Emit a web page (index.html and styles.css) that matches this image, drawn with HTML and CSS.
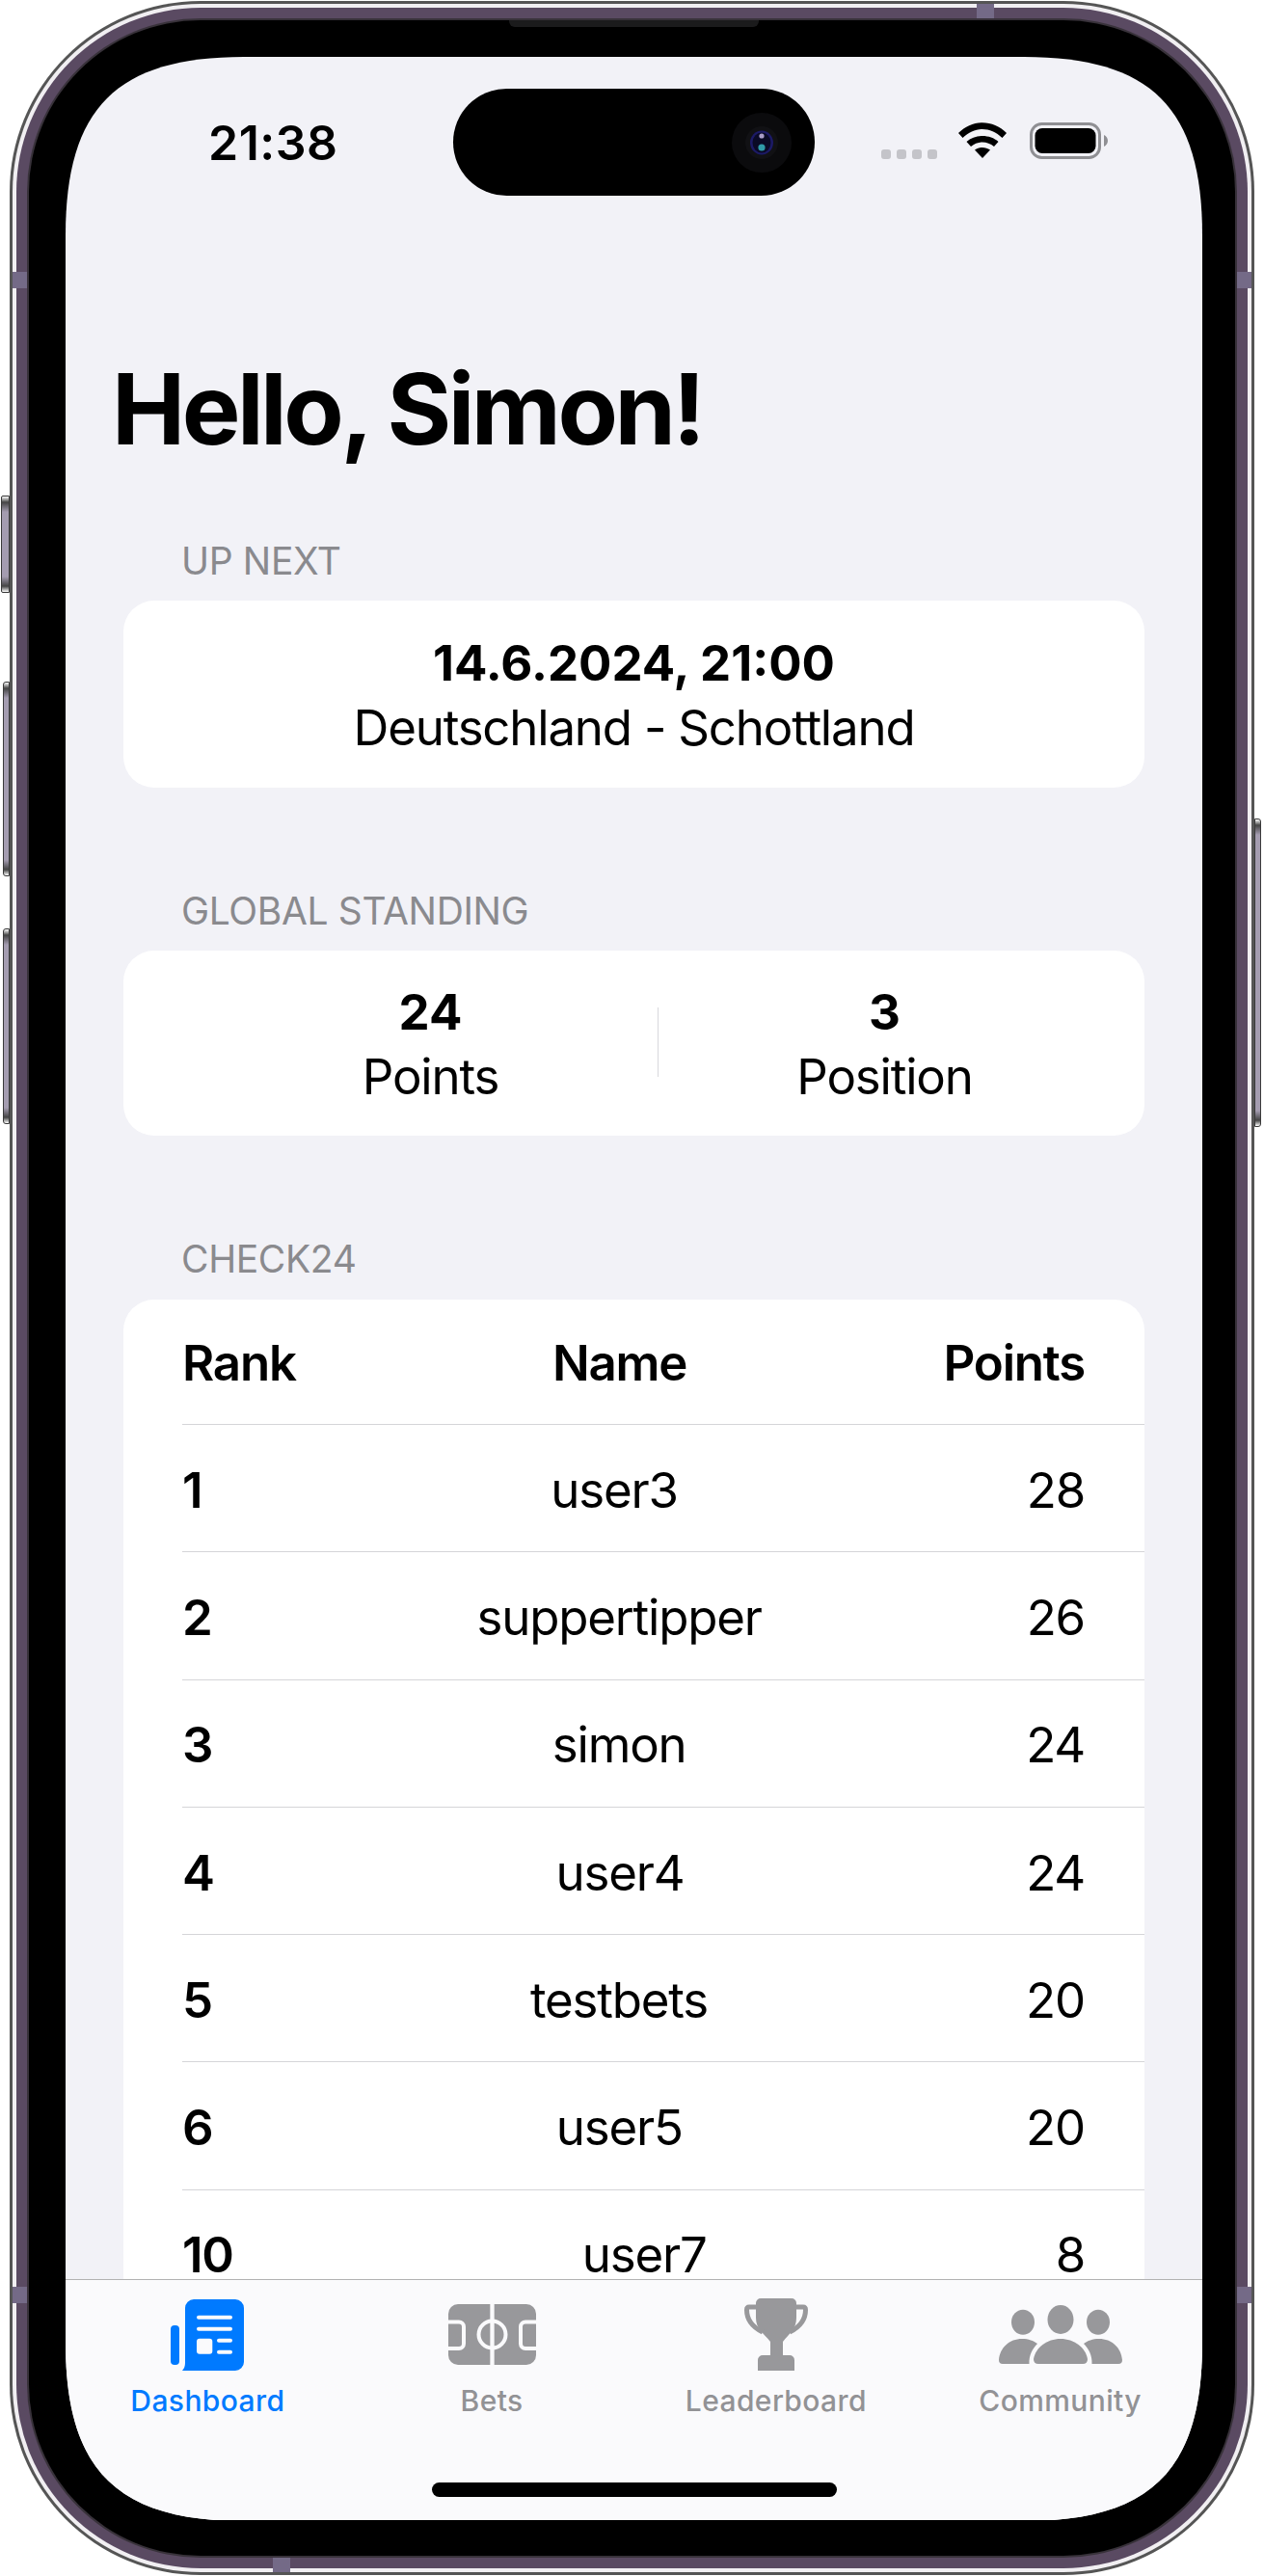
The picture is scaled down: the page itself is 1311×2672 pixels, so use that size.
FILE: index.html
```html
<!DOCTYPE html>
<html lang="en">
<head>
<meta charset="utf-8">
<title>Dashboard</title>
<link rel="stylesheet" href="styles.css">
</head>
<body>
<div class="device">
  <span class="btn btn-mute"></span>
  <span class="btn btn-up"></span>
  <span class="btn btn-down"></span>
  <span class="btn btn-power"></span>
  <div class="rim">
    <div class="band">
      <span class="ant ant-l1"></span>
      <span class="ant ant-l2"></span>
      <span class="ant ant-r1"></span>
      <span class="ant ant-r2"></span>
      <span class="ant ant-t"></span>
      <span class="ant ant-b"></span>
      <div class="inner-line">
        <div class="bezel">
          <span class="speaker"></span>
          <div class="screen">
            <header class="status">
              <div class="time">21:38</div>
              <div class="island">
                <svg class="camera" width="62" height="62" viewBox="0 0 62 62">
                  <circle cx="31" cy="31" r="31" fill="#0b0b0d"/>
                  <circle cx="31" cy="31" r="17" fill="#111114"/>
                  <ellipse cx="31" cy="31" rx="12" ry="12.5" fill="#1c1a66"/>
                  <ellipse cx="31" cy="31" rx="9.5" ry="10.5" fill="#0a0a26"/>
                  <circle cx="31" cy="24" r="2.6" fill="#a89cc8"/>
                  <circle cx="31" cy="36" r="3.6" fill="#2f9aa8"/>
                </svg>
              </div>
              <div class="indicators">
                <div class="dots"><i></i><i></i><i></i><i></i></div>
                <svg class="wifi" width="50" height="37" viewBox="0 0 50 37">
                  <path d="M0 11C14-3.500 36-3.500 50 11L45.500 16C33 4 17 4 4.500 16Z"/>
                  <path d="M8.500 20C17 12 33 12 41.500 20L37 25C30 19 20 19 13 25Z"/>
                  <path d="M17 28.500C22 25 28 25 33 28.500L25 37Z"/>
                </svg>
                <svg class="battery" width="81" height="38" viewBox="0 0 81 38">
                  <rect x="1.500" y="1.500" width="71" height="35" rx="11" fill="none" stroke="#8f8f93" stroke-width="3"/>
                  <rect x="5.500" y="6" width="63" height="26" rx="7.500" fill="#000"/>
                  <path d="M77 13C79.500 14 81 16.500 81 19C81 21.500 79.500 24 77 25Z" fill="#8f8f93"/>
                </svg>
              </div>
            </header>

            <main class="content">
              <h1 class="title">Hello, Simon!</h1>

              <section class="group">
                <h2 class="group-label">UP NEXT</h2>
                <div class="card card-next">
                  <div class="strong">14.6.2024, 21:00</div>
                  <div class="plain">Deutschland - Schottland</div>
                </div>
              </section>

              <section class="group">
                <h2 class="group-label">GLOBAL STANDING</h2>
                <div class="card card-standing">
                  <div class="stat">
                    <div class="strong">24</div>
                    <div class="plain">Points</div>
                  </div>
                  <div class="stat">
                    <div class="strong">3</div>
                    <div class="plain">Position</div>
                  </div>
                </div>
              </section>

              <section class="group">
                <h2 class="group-label group-label-table">CHECK24</h2>
                <div class="card card-table">
                  <div class="row row-head"><span>Rank</span><span>Name</span><span>Points</span></div>
                  <div class="row"><span class="rank">1</span><span>user3</span><span>28</span></div>
                  <div class="row"><span class="rank">2</span><span>suppertipper</span><span>26</span></div>
                  <div class="row"><span class="rank">3</span><span>simon</span><span>24</span></div>
                  <div class="row"><span class="rank">4</span><span>user4</span><span>24</span></div>
                  <div class="row"><span class="rank">5</span><span>testbets</span><span>20</span></div>
                  <div class="row"><span class="rank">6</span><span>user5</span><span>20</span></div>
                  <div class="row"><span class="rank">10</span><span>user7</span><span>8</span></div>
                </div>
              </section>
            </main>

            <nav class="tabbar">
              <div class="tabs">
                <div class="tab tab-active">
                  <div class="tab-icon">
                    <svg width="76" height="74" viewBox="0 0 76 74">
                      <rect x="0" y="27" width="9" height="41" rx="4" fill="#007aff"/>
                      <path fill="#007aff" d="M24 0H67a9 9 0 0 1 9 9V65a9 9 0 0 1-9 9H12C14 72 15 69 15 66V9a9 9 0 0 1 9-9Z"/>
                      <g fill="#fafafc">
                        <rect x="27" y="16.700" width="37" height="4" rx="2"/>
                        <rect x="27" y="28.700" width="37" height="4" rx="2"/>
                        <rect x="27" y="40.700" width="16.300" height="16" rx="3"/>
                        <rect x="48" y="40.700" width="16" height="4" rx="2"/>
                        <rect x="48" y="52.700" width="16" height="4" rx="2"/>
                      </g>
                    </svg>
                  </div>
                  <span class="tab-label">Dashboard</span>
                </div>
                <div class="tab">
                  <div class="tab-icon">
                    <svg width="91" height="63" viewBox="0 0 91 63">
                      <rect width="91" height="63" rx="10" fill="#98989b"/>
                      <g fill="none" stroke="#fafafc" stroke-width="4">
                        <path d="M45.500 0V63" stroke-width="4.300"/>
                        <circle cx="45.500" cy="31.500" r="14"/>
                        <path d="M0 18.500H11a5 5 0 0 1 5 5V41a5 5 0 0 1-5 5H0"/>
                        <path d="M91 18.500H80a5 5 0 0 0-5 5V41a5 5 0 0 0 5 5H91"/>
                      </g>
                    </svg>
                  </div>
                  <span class="tab-label">Bets</span>
                </div>
                <div class="tab">
                  <div class="tab-icon">
                    <svg width="66" height="75" viewBox="0 0 66 75">
                      <path fill="#98989b" d="M17 0H49a5 5 0 0 1 5 5V20C54 32 47 36 40 45V59H47a5 5 0 0 1 5 5V75H14V64a5 5 0 0 1 5-5H27V45C20 36 12 32 12 20V5a5 5 0 0 1 5-5Z"/>
                      <g fill="none" stroke="#98989b" stroke-width="5">
                        <path d="M12 9H5Q2.500 9 2.500 12C2.500 22 9 30 19 35"/>
                        <path d="M54 9H61Q63.500 9 63.500 12C63.500 22 57 30 47 35"/>
                      </g>
                    </svg>
                  </div>
                  <span class="tab-label">Leaderboard</span>
                </div>
                <div class="tab">
                  <div class="tab-icon">
                    <svg width="128" height="61" viewBox="0 0 128 61">
                      <g fill="#98989b">
                        <ellipse cx="64" cy="15" rx="13.500" ry="15"/>
                        <ellipse cx="25" cy="17.700" rx="12" ry="13"/>
                        <ellipse cx="103" cy="17.700" rx="12" ry="13"/>
                        <path d="M41 61Q36 61 36 56C38 44 50 35 64 35C78 35 90 44 92 56Q92 61 87 61Z"/>
                        <path d="M4 61Q0 61 0 57C1 44 11 35 24 35C31 35 36 37 40 40C35 45 31 52 31.500 61Z"/>
                        <path d="M124 61Q128 61 128 57C127 44 117 35 104 35C97 35 92 37 88 40C93 45 97 52 96.500 61Z"/>
                      </g>
                    </svg>
                  </div>
                  <span class="tab-label">Community</span>
                </div>
              </div>
              <div class="home-indicator"></div>
            </nav>
          </div>
        </div>
      </div>
    </div>
  </div>
</div>
</body>
</html>
```

FILE: styles.css
```css
* { box-sizing: border-box; }
html, body { margin: 0; padding: 0; background: #fff; }
body {
  width: 1311px;
  height: 2672px;
  padding: 1px 10px;
  overflow: hidden;
  font-family: Inter, "Liberation Sans", sans-serif;
  color: #000;
}

/* device frame */
.device {
  position: relative;
  width: 1291px;
  height: 2670px;
  background: #555;
  border-radius: 198px;
  padding: 3px;
}
.rim {
  height: 100%;
  background: #f1eff2;
  border-radius: 195px;
  padding: 4px;
}
.band {
  position: relative;
  height: 100%;
  background: #5a4a62;
  border-radius: 191px;
  padding: 11px;
}
.inner-line {
  height: 100%;
  background: #38323a;
  border-radius: 180px;
  padding: 2px;
}
.bezel {
  position: relative;
  height: 100%;
  background: #000;
  border-radius: 178px;
  padding: 38px 34px 37px 38px;
}
.speaker {
  position: absolute;
  top: 0;
  left: 498px;
  width: 259px;
  height: 7px;
  background: #1b1b1c;
  border-radius: 0 0 6px 6px;
}
.ant { position: absolute; background: #746a87; }
.ant-l1 { left: -4px; top: 274px; width: 15px; height: 17px; }
.ant-l2 { left: -4px; top: 2364px; width: 15px; height: 17px; }
.ant-r1 { right: -4px; top: 274px; width: 15px; height: 17px; }
.ant-r2 { right: -4px; top: 2364px; width: 15px; height: 17px; }
.ant-t { top: -4px; left: 996px; width: 18px; height: 15px; }
.ant-b { bottom: -4px; left: 266px; width: 18px; height: 15px; }

.btn {
  position: absolute;
  width: 7px;
  border: 1px solid #3a3a3a;
  background: linear-gradient(to bottom, #fff 0, #444 6px, #a49cb0 16px, #a49cb0 calc(100% - 16px), #444 calc(100% - 6px), #fff 100%);
}
.btn-mute { left: -9px; top: 513px; width: 9px; height: 101px; border-radius: 2px 0 0 2px; }
.btn-up { left: -7px; top: 706px; height: 202px; border-radius: 3px 0 0 3px; }
.btn-down { left: -7px; top: 962px; height: 203px; border-radius: 3px 0 0 3px; }
.btn-power { right: -7px; top: 848px; height: 320px; border-radius: 0 3px 3px 0; }

/* screen */
.screen {
  position: relative;
  height: 100%;
  width: 1179px;
  display: flex;
  flex-direction: column;
  overflow: hidden;
  background: #f2f2f7;
  clip-path: path("M0 185C0 53 53 0 185 0H994C1126 0 1179 53 1179 185V2371C1179 2503 1126 2556 994 2556H185C53 2556 0 2503 0 2371Z");
}
.status {
  flex: none;
  height: 150px;
  padding-top: 33px;
  display: grid;
  grid-template-columns: 402px 375px 1fr;
}
.time {
  padding: 26px 0 0 148px;
  font-size: 50px;
  line-height: 60px;
  font-weight: 600;
  letter-spacing: 0.5px;
}
.island {
  height: 111px;
  background: #000;
  border-radius: 56px;
  display: flex;
  align-items: center;
  justify-content: flex-end;
  padding-right: 24px;
}
.indicators {
  display: flex;
  align-items: flex-start;
  padding: 35px 0 0 69px;
}
.dots {
  display: flex;
  gap: 6px;
  margin-top: 28px;
  margin-right: 22px;
}
.dots i {
  display: block;
  width: 10px;
  height: 10px;
  border-radius: 3px;
  background: #c4c4c9;
}
.wifi { margin: 0 24px 0 0; flex: none; }
.battery { flex: none; }

/* content: the list scrolls under the tab bar, which is painted over it */
.content {
  flex: 1;
  min-height: 0;
  padding: 153px 60px 0 48px;
}
.title {
  margin: 0;
  font-size: 102px;
  line-height: 124px;
  font-weight: 700;
  letter-spacing: -3.5px;
}
.group { margin: 0 0 0 12px; }
.group-label {
  margin: 72px 0 17px;
  padding-left: 60px;
  font-size: 39px;
  line-height: 48px;
  font-weight: 400;
  letter-spacing: -0.35px;
  color: #8a8a8e;
}
.group + .group .group-label { margin-top: 104px; }
.group + .group .group-label-table { margin-bottom: 18px; }
.card {
  width: 1059px;
  background: #fff;
  border-radius: 32px;
}
.strong { font-size: 51px; line-height: 68px; font-weight: 700; }
.plain { font-size: 51px; line-height: 68px; font-weight: 400; letter-spacing: -1.2px; }
.card-next {
  height: 194px;
  padding-top: 31px;
  text-align: center;
}
.card-next .plain { margin-top: -1px; }
.card-standing {
  height: 192px;
  padding: 29px 34px 0 83px;
  display: grid;
  grid-template-columns: 1fr 1fr;
  text-align: center;
}
.stat { height: 136px; }
.stat .strong { padding-top: 1px; margin-bottom: -1px; }
.stat + .stat { position: relative; }
.stat + .stat::before {
  content: "";
  position: absolute;
  left: 0;
  top: 30px;
  width: 1px;
  height: 72px;
  background: #d8d8dc;
}
.card-table { padding-left: 61px; }
.row {
  display: flex;
  justify-content: space-between;
  align-items: center;
  height: 132.300px;
  padding: 4px 62px 0 0;
  font-size: 51px;
  line-height: 48px;
  letter-spacing: -1.2px;
  border-bottom: 1px solid #d5d5d8;
}
.row-head { height: 130px; padding-top: 2px; font-weight: 600; }
.rank { font-weight: 600; }

/* tab bar */
.tabbar {
  position: relative;
  flex: none;
  height: 250px;
  background: #fafafc;
  border-top: 1px solid #b2b2b2;
}
.tabs {
  display: grid;
  grid-template-columns: repeat(4, 1fr);
}
.tab {
  display: flex;
  flex-direction: column;
  align-items: center;
  color: #929295;
}
.tab-active { color: #007aff; }
.tab-icon {
  height: 107px;
  padding-top: 6px;
  display: flex;
  align-items: center;
  justify-content: center;
}
.tab-label {
  font-size: 30px;
  line-height: 36px;
  font-weight: 500;
  letter-spacing: 0.4px;
}
.home-indicator {
  position: absolute;
  left: 380px;
  bottom: 24px;
  width: 420px;
  height: 15px;
  background: #000;
  border-radius: 8px;
}
```
